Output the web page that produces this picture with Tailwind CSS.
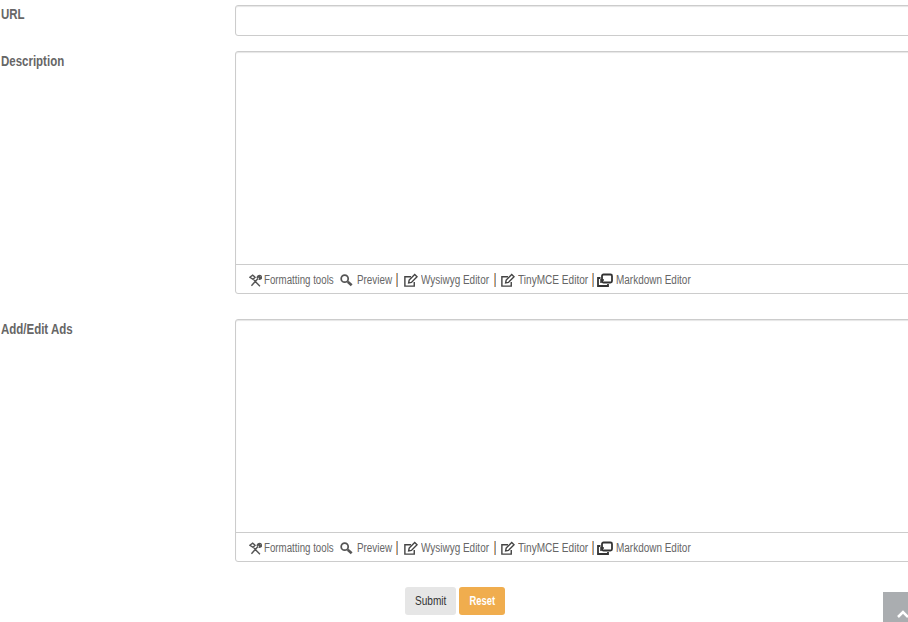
<!DOCTYPE html>
<html lang="en">
  <head>
    <meta charset="UTF-8" />
    <meta name="viewport" content="width=device-width, initial-scale=1.0" />
    <title>Edit</title>
    <script src="https://cdn.jsdelivr.net/npm/@tailwindcss/browser@4"></script>
  </head>
  <body class="relative h-screen overflow-hidden bg-white font-['Liberation_Sans',sans-serif] text-[#666]">
    <form class="w-[1000px] pt-[5px]">
      <div class="flex mb-[15px]">
        <label class="w-[235px] pl-px text-sm leading-[18px] font-bold"><span class="block origin-left scale-x-[.82]">URL</span></label>
        <input type="text" class="w-[700px] h-[31px] border border-[#ccc] rounded-[3px] bg-white shadow-[inset_0_1px_1px_rgba(0,0,0,.1)]" />
      </div>

      <div class="flex mb-[25px]">
        <label class="w-[235px] pl-px text-sm leading-5 font-bold"><span class="block origin-left scale-x-[.82]">Description</span></label>
        <div class="w-[700px] h-[243px] border border-[#ccc] rounded-[3px] flex flex-col shadow-[inset_0_1px_1px_rgba(0,0,0,.1)]">
          <textarea class="flex-1 resize-none outline-none"></textarea>
          <div class="h-[29px] border-t border-[#ccc] pl-[13px] pt-[2px] flex items-center text-xs whitespace-nowrap">
            <svg class="w-[13px] h-[13px] mr-[2px] shrink-0" viewBox="0 0 16 16" fill="none" stroke="#555" stroke-width="1.700"><path d="M3 14.500 11 5.500M1 4 4.500 1.500 7.500 4 5 6.500zM6 7.500l7.500 7.500M10 5c.3-2.500 2-3.500 4-3l-2 2 1 1 2.500-1.500c.3 2-1.500 3.500-3.500 3"/></svg>
            <span class="inline-block w-[70px] origin-left scale-x-[.81]">Formatting tools</span>
            <svg class="w-[14px] h-[14px] ml-[5px] mr-[4px] shrink-0" viewBox="0 0 16 16" fill="none" stroke="#555"><circle cx="6.500" cy="6.500" r="4" stroke-width="2"/><path d="M10 10l4.500 4" stroke-width="3"/></svg>
            <span class="inline-block w-[35px] origin-left scale-x-[.82]">Preview</span>
            <span class="ml-[4px] w-[2px] h-[14px] shrink-0 border-l border-r border-l-[#e8a868] border-r-[#7fa0c4]"></span>
            <svg class="w-[15px] h-[15px] ml-[5px] mr-[3px] shrink-0" viewBox="0 0 16 16" fill="none" stroke="#444" stroke-width="1.500"><path d="M12 9.500V14H2V4h6.500"/><path d="M6 10.500 6.600 7.500 12.500 1.500 15 4 9 10z"/></svg>
            <span class="inline-block w-[69px] origin-left scale-x-[.83]">Wysiwyg Editor</span>
            <span class="ml-[4px] w-[2px] h-[14px] shrink-0 border-l border-r border-l-[#e8a868] border-r-[#7fa0c4]"></span>
            <svg class="w-[15px] h-[15px] ml-[4px] mr-[3px] shrink-0" viewBox="0 0 16 16" fill="none" stroke="#444" stroke-width="1.500"><path d="M12 9.500V14H2V4h6.500"/><path d="M6 10.500 6.600 7.500 12.500 1.500 15 4 9 10z"/></svg>
            <span class="inline-block w-[71px] origin-left scale-x-[.84]">TinyMCE Editor</span>
            <span class="ml-[3px] w-[2px] h-[14px] shrink-0 border-l border-r border-l-[#e8a868] border-r-[#7fa0c4]"></span>
            <svg class="w-[16px] h-[14px] ml-[3px] mr-[3px] shrink-0" viewBox="0 0 16 14" fill="none" stroke="#333" stroke-width="1.800"><rect x="5" y="1.500" width="10" height="8" rx="1.500"/><path d="M3.500 5H1v8h10v-2"/><path d="M3 7h4M3 9h3" stroke-width="1.500"/></svg>
            <span class="inline-block w-[75px] origin-left scale-x-[.83]">Markdown Editor</span>
          </div>
        </div>
      </div>

      <div class="flex mb-[25px]">
        <label class="w-[235px] pl-px text-sm leading-5 font-bold"><span class="block origin-left scale-x-[.82]">Add/Edit Ads</span></label>
        <div class="w-[700px] h-[243px] border border-[#ccc] rounded-[3px] flex flex-col shadow-[inset_0_1px_1px_rgba(0,0,0,.1)]">
          <textarea class="flex-1 resize-none outline-none"></textarea>
          <div class="h-[29px] border-t border-[#ccc] pl-[13px] pt-[2px] flex items-center text-xs whitespace-nowrap">
            <svg class="w-[13px] h-[13px] mr-[2px] shrink-0" viewBox="0 0 16 16" fill="none" stroke="#555" stroke-width="1.700"><path d="M3 14.500 11 5.500M1 4 4.500 1.500 7.500 4 5 6.500zM6 7.500l7.500 7.500M10 5c.3-2.500 2-3.500 4-3l-2 2 1 1 2.500-1.500c.3 2-1.500 3.500-3.500 3"/></svg>
            <span class="inline-block w-[70px] origin-left scale-x-[.81]">Formatting tools</span>
            <svg class="w-[14px] h-[14px] ml-[5px] mr-[4px] shrink-0" viewBox="0 0 16 16" fill="none" stroke="#555"><circle cx="6.500" cy="6.500" r="4" stroke-width="2"/><path d="M10 10l4.500 4" stroke-width="3"/></svg>
            <span class="inline-block w-[35px] origin-left scale-x-[.82]">Preview</span>
            <span class="ml-[4px] w-[2px] h-[14px] shrink-0 border-l border-r border-l-[#e8a868] border-r-[#7fa0c4]"></span>
            <svg class="w-[15px] h-[15px] ml-[5px] mr-[3px] shrink-0" viewBox="0 0 16 16" fill="none" stroke="#444" stroke-width="1.500"><path d="M12 9.500V14H2V4h6.500"/><path d="M6 10.500 6.600 7.500 12.500 1.500 15 4 9 10z"/></svg>
            <span class="inline-block w-[69px] origin-left scale-x-[.83]">Wysiwyg Editor</span>
            <span class="ml-[4px] w-[2px] h-[14px] shrink-0 border-l border-r border-l-[#e8a868] border-r-[#7fa0c4]"></span>
            <svg class="w-[15px] h-[15px] ml-[4px] mr-[3px] shrink-0" viewBox="0 0 16 16" fill="none" stroke="#444" stroke-width="1.500"><path d="M12 9.500V14H2V4h6.500"/><path d="M6 10.500 6.600 7.500 12.500 1.500 15 4 9 10z"/></svg>
            <span class="inline-block w-[71px] origin-left scale-x-[.84]">TinyMCE Editor</span>
            <span class="ml-[3px] w-[2px] h-[14px] shrink-0 border-l border-r border-l-[#e8a868] border-r-[#7fa0c4]"></span>
            <svg class="w-[16px] h-[14px] ml-[3px] mr-[3px] shrink-0" viewBox="0 0 16 14" fill="none" stroke="#333" stroke-width="1.800"><rect x="5" y="1.500" width="10" height="8" rx="1.500"/><path d="M3.500 5H1v8h10v-2"/><path d="M3 7h4M3 9h3" stroke-width="1.500"/></svg>
            <span class="inline-block w-[75px] origin-left scale-x-[.83]">Markdown Editor</span>
          </div>
        </div>
      </div>

      <div class="flex pl-[405px] gap-[3px]">
        <button type="submit" class="w-[51px] h-[28px] rounded-[3px] bg-[#e6e6e6] text-xs text-[#333]"><span class="inline-block scale-x-[.84]">Submit</span></button>
        <button type="reset" class="w-[46px] h-[28px] rounded-[3px] bg-[#f0ad4e] text-xs font-bold text-white"><span class="inline-block scale-x-[.78]">Reset</span></button>
      </div>
    </form>

    <a class="absolute left-[883px] top-[592px] w-[40px] h-[40px] bg-[#aaadb0] flex justify-center pt-[18px]">
      <svg class="w-[12px] h-[8px]" viewBox="0 0 12 8" fill="none" stroke="#fff" stroke-width="2.500"><path d="M1 7l5-5 5 5"/></svg>
    </a>
  </body>
</html>
